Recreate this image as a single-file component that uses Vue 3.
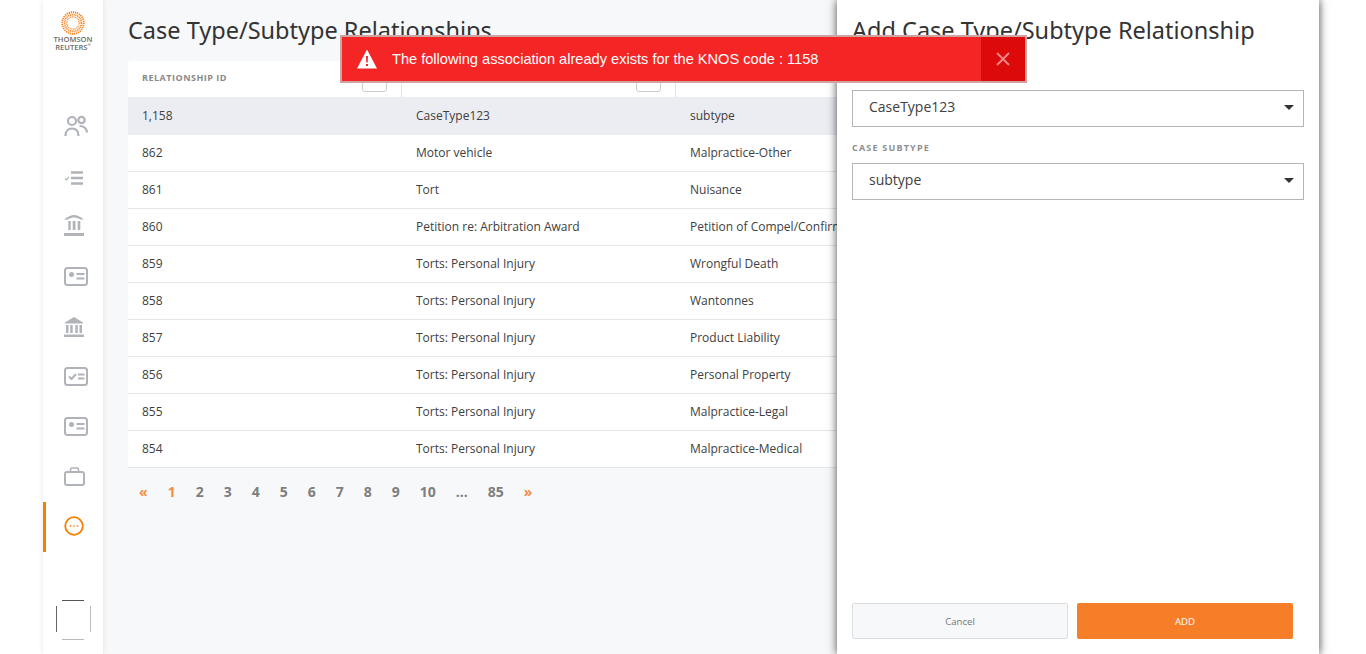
<template>
  <div class="page">
    <aside class="rail">
      <div class="logo">
        <svg width="24" height="24" viewBox="0 0 24 24" fill="none" stroke="#f58220">
          <circle cx="12" cy="12" r="10.8" stroke-width="1.800" stroke-dasharray="1.300 .8" />
          <circle cx="12" cy="12" r="8.400" stroke-width="1.600" stroke-dasharray="1.200 .7" />
          <circle cx="12" cy="12" r="6.200" stroke-width="1.200" stroke-dasharray="1 .7" />
        </svg>
        <div class="logo-text">THOMSON<br />REUTERS<sup>®</sup></div>
      </div>
      <nav class="nav">
        <a class="nav-item">
          <svg width="24" height="22" viewBox="0 0 24 22" fill="none" stroke="#b1b3bb" stroke-width="2.200">
            <circle cx="8" cy="6" r="4" /><circle cx="17.500" cy="5" r="3.200" />
            <path d="M1.500 21c0-5 2.800-7.500 6.500-7.500s6.500 2.500 6.500 7.500M15.500 11c4 0 7 2 7.500 6.500" />
          </svg>
        </a>
        <a class="nav-item list">
          <svg width="20" height="14" viewBox="0 0 20 14" fill="none" stroke="#b1b3bb">
            <path d="M1 7.500l1.300 1.300L5 6" stroke-width="1.200" />
            <path d="M7 1.500h12M7 7h12M7 12.500h12" stroke-width="2.400" />
          </svg>
        </a>
        <a class="nav-item roof">
          <svg width="20" height="21" viewBox="0 0 20 21" fill="#b1b3bb">
            <path d="M0 4.500C4 1.500 7 0 10 0s6 1.500 10 4.500h-3.500C13.500 3 11.500 2.500 10 2.500S6.500 3 3.500 4.500z" />
            <path d="M4.300 6h2.400v9H4.300zM8.700 6h2.800v9H8.700zM13.700 6h2.600v9h-2.600z" />
            <path d="M0 18h20v3H0z" />
          </svg>
        </a>
        <a class="nav-item">
          <svg width="24" height="19" viewBox="0 0 24 19" fill="none">
            <rect x="1" y="1" width="22" height="17" rx="2.500" stroke="#b1b3bb" stroke-width="2" />
            <circle cx="7.500" cy="7.500" r="2.500" fill="#b1b3bb" />
            <path d="M12.500 7h8M12.500 11.500h8" stroke="#b1b3bb" stroke-width="2" />
          </svg>
        </a>
        <a class="nav-item bank">
          <svg width="20" height="20" viewBox="0 0 20 20" fill="#b1b3bb">
            <path d="M10 0l9 5.500v1H1v-1z" />
            <path d="M2 8h2.500v8H2zM6.200 8h2.500v8H6.200zM11.300 8h2.500v8h-2.500zM15.500 8H18v8h-2.500z" />
            <path d="M0 17.500h20V20H0z" />
          </svg>
        </a>
        <a class="nav-item">
          <svg width="24" height="19" viewBox="0 0 24 19" fill="none">
            <rect x="1" y="1" width="22" height="17" rx="2.500" stroke="#b1b3bb" stroke-width="2" />
            <path d="M5 9.500l2.500 2.500L12 7" stroke="#b1b3bb" stroke-width="2" />
            <path d="M14 7.500h6.500M14 11.500h6.500" stroke="#b1b3bb" stroke-width="2" />
          </svg>
        </a>
        <a class="nav-item">
          <svg width="24" height="19" viewBox="0 0 24 19" fill="none">
            <rect x="1" y="1" width="22" height="17" rx="2.500" stroke="#b1b3bb" stroke-width="2" />
            <circle cx="7.500" cy="7.500" r="2.500" fill="#b1b3bb" />
            <path d="M12.500 7h8M12.500 11.500h8" stroke="#b1b3bb" stroke-width="2" />
          </svg>
        </a>
        <a class="nav-item">
          <svg width="21" height="19" viewBox="0 0 21 19" fill="none" stroke="#b1b3bb" stroke-width="2">
            <rect x="1" y="5" width="19" height="13" rx="2" />
            <path d="M6.500 5V2.500C6.500 1.500 7 1 8 1h5c1 0 1.500.5 1.500 1.500V5" stroke-width="1.500" />
          </svg>
        </a>
        <a class="nav-item active">
          <svg width="20" height="20" viewBox="0 0 20 20" fill="none">
            <circle cx="10" cy="10" r="8.800" stroke="#f77f00" stroke-width="1.800" />
            <path d="M5.800 10h1.400M9.300 10h1.400M12.800 10h1.400" stroke="#f77f00" stroke-width="1.300" />
          </svg>
        </a>
      </nav>
      <div class="avatar">
        <svg width="35" height="40" viewBox="0 0 35 40" fill="none">
          <path d="M6 .5h22" stroke="#555" />
          <path d="M.5 6v26" stroke="#666" />
          <path d="M34.500 6v26" stroke="#bbb" />
          <path d="M6 39.500h22" stroke="#bbb" />
        </svg>
      </div>
    </aside>

    <main class="content">
      <h1 class="title">Case Type/Subtype Relationships</h1>
      <div class="table">
        <div class="row head">
          <div class="cell">RELATIONSHIP ID<span class="filter"></span></div>
          <div class="cell">CASE TYPE<span class="filter"></span></div>
          <div class="cell">CASE SUBTYPE</div>
        </div>
        <div v-for="(r, i) in rows" :key="r[0]" class="row" :class="{ selected: i === 0 }">
          <div class="cell">{{ r[0] }}</div>
          <div class="cell">{{ r[1] }}</div>
          <div class="cell">{{ r[2] }}</div>
        </div>
      </div>
      <div class="pager">
        <span class="pg arrow">«</span>
        <span v-for="p in pages" :key="p" class="pg" :class="{ on: p === '1' }">{{ p }}</span>
        <span class="pg arrow">»</span>
      </div>
    </main>

    <section class="panel">
      <h2 class="panel-title">Add Case Type/Subtype Relationship</h2>
      <label class="field-label first">CASE TYPE</label>
      <div class="select">CaseType123<i class="caret"></i></div>
      <label class="field-label">CASE SUBTYPE</label>
      <div class="select">subtype<i class="caret"></i></div>
      <div class="actions">
        <button class="btn cancel">Cancel</button>
        <button class="btn add">ADD</button>
      </div>
    </section>

    <div class="alert">
      <svg class="alert-icon" width="20" height="20" viewBox="0 0 20 20">
        <path d="M10 .5L20 19.500H0z" fill="#fff" />
        <path d="M9 7h2l-.3 6.500H9.300zM9 15h2v2H9z" fill="#f42525" />
      </svg>
      <span class="alert-text">The following association already exists for the KNOS code : 1158</span>
      <button class="alert-close">
        <svg width="14" height="14" viewBox="0 0 14 14" stroke="#f0888a" stroke-width="1.800">
          <path d="M1 1l12 12M13 1L1 13" />
        </svg>
      </button>
    </div>
  </div>
</template>

<script setup>
const rows = [
  ['1,158', 'CaseType123', 'subtype'],
  ['862', 'Motor vehicle', 'Malpractice-Other'],
  ['861', 'Tort', 'Nuisance'],
  ['860', 'Petition re: Arbitration Award', 'Petition of Compel/Confirm/Vacate'],
  ['859', 'Torts: Personal Injury', 'Wrongful Death'],
  ['858', 'Torts: Personal Injury', 'Wantonnes'],
  ['857', 'Torts: Personal Injury', 'Product Liability'],
  ['856', 'Torts: Personal Injury', 'Personal Property'],
  ['855', 'Torts: Personal Injury', 'Malpractice-Legal'],
  ['854', 'Torts: Personal Injury', 'Malpractice-Medical'],
]
const pages = ['1', '2', '3', '4', '5', '6', '7', '8', '9', '10', '...', '85']
</script>

<style>
html, body { margin: 0; background: #fff; overflow: hidden; }
</style>

<style scoped>
.page { position: relative; display: flex; width: 1366px; height: 654px; overflow: hidden; padding-left: 43px; box-sizing: border-box; background: #fff; font-family: "Open Sans", "Noto Sans", sans-serif; color: #404040; }
.rail { position: relative; z-index: 1; flex: none; width: 60px; display: flex; flex-direction: column; background: #fff; box-shadow: 0 0 5px rgba(0, 0, 0, .1); }
.logo { display: flex; flex-direction: column; align-items: center; padding-top: 11px; height: 102px; box-sizing: border-box; }
.logo-text { margin-top: 0; font-size: 7.600px; line-height: 8px; text-align: center; font-weight: 600; color: #6b6b6b; }
.logo-text sup { font-size: 4px; line-height: 0; }
.nav { display: flex; flex-direction: column; }
.nav-item { height: 50px; display: flex; align-items: center; padding-left: 21px; box-sizing: border-box; }
.nav-item svg { margin-top: -2px; }
.nav-item.list svg { margin-top: 2px; }
.nav-item.roof svg { margin-top: -3px; }
.nav-item.bank svg { margin-top: 0; }
.nav-item.active { border-left: 3px solid #f77f00; padding-left: 18px; }
.avatar { margin-top: auto; margin-bottom: 14px; padding-left: 13px; line-height: 0; }
.content { flex: none; width: 1220px; background: #f7f8fa; padding: 14px 0 0 25px; box-sizing: border-box; }
.title { margin: 0 0 15px; font-family: "Noto Sans", sans-serif; font-size: 23.500px; line-height: 32px; font-weight: 400; color: #333; }
.table { width: 822px; }
.row { display: grid; grid-template-columns: 274px 274px 274px; height: 37px; align-items: center; background: #fff; border-bottom: 1px solid #e6e7eb; box-sizing: border-box; font-size: 12px; color: #404040; }
.row.head { height: 36px; font-size: 9px; font-weight: 700; letter-spacing: .5px; color: #8a8a8a; border-bottom: 0; border-top-left-radius: 4px; }
.row.selected { height: 38px; background: #ecedf2; border-bottom-color: #ecedf2; }
.cell { position: relative; height: 100%; display: flex; align-items: center; padding: 0 0 1px 14px; white-space: nowrap; overflow: hidden; box-sizing: border-box; }
.selected .cell { padding-bottom: 0; }
.head .cell { border-right: 1px solid #e2e3e7; padding: 0 0 4px 14px; }
.filter { position: absolute; right: 14px; bottom: 5px; width: 25px; height: 16px; border: 1px solid #ccc; border-radius: 3px; box-sizing: border-box; background: #fff; }
.pager { display: flex; align-items: center; height: 47px; margin-left: 1px; font-size: 14px; font-weight: 700; color: #7e7e7e; }
.pg { padding: 0 10px; }
.arrow, .pg.on { color: #f98b3d; }
.panel { position: absolute; z-index: 2; left: 837px; top: 0; bottom: 0; width: 482px; padding: 14px 15px 15px; box-sizing: border-box; display: flex; flex-direction: column; background: #fff; box-shadow: 0 0 9px rgba(0, 0, 0, .7); }
.panel-title { margin: 0; font-family: "Noto Sans", sans-serif; font-size: 23.500px; line-height: 32px; font-weight: 400; color: #333; }
.field-label { display: block; margin: 14px 0 9px; font-size: 9px; line-height: 13px; font-weight: 700; letter-spacing: 1.200px; color: #8e8e8e; }
.field-label.first { margin-top: 22px; }
.select { position: relative; height: 37px; padding: 0 0 5px 16px; display: flex; align-items: center; border: 1px solid #b4b5ba; box-sizing: border-box; font-size: 14px; color: #404040; }
.caret { position: absolute; right: 9px; top: 14px; border-left: 5px solid transparent; border-right: 5px solid transparent; border-top: 5px solid #333; }
.actions { margin-top: auto; display: flex; gap: 9px; }
.btn { width: 216px; height: 36px; border-radius: 2px; font: inherit; font-size: 9.600px; cursor: pointer; }
.cancel { background: #f7f8fa; border: 1px solid #dcdddf; color: #777; }
.add { background: #f77e28; border: 0; color: #fff; font-weight: 500; }
.alert { position: absolute; z-index: 3; left: 340px; top: 35px; width: 687px; height: 48px; display: flex; align-items: center; box-sizing: border-box; border: 2px solid #d0a3a3; background: #f42525; font-family: "Liberation Sans", Arial, sans-serif; }
.alert-icon { margin-left: 15px; flex: none; }
.alert-text { margin-left: 15px; font-size: 14.600px; color: #fff; white-space: nowrap; }
.alert-close { margin-left: auto; width: 44px; height: 44px; padding: 0; border: 0; background: #dc0a0a; display: flex; align-items: center; justify-content: center; }
</style>
